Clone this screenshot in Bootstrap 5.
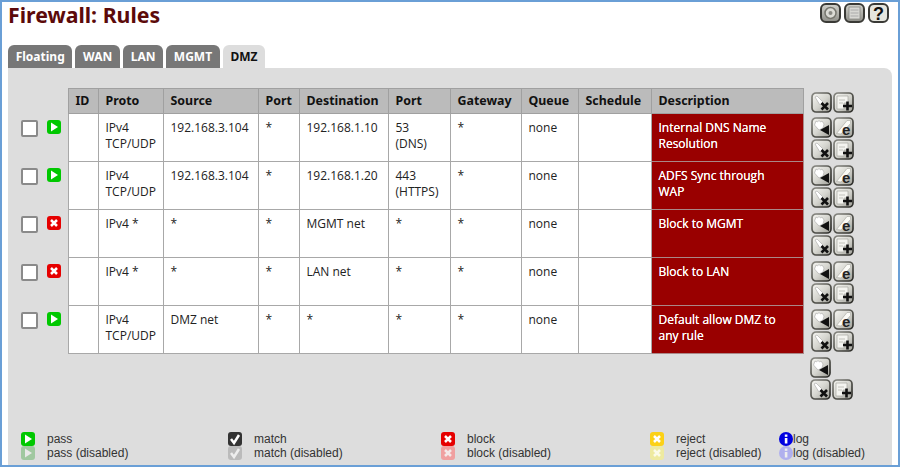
<!doctype html>
<html lang="en">
<head>
<meta charset="utf-8">
<title>Firewall: Rules</title>
<link rel="stylesheet" href="https://cdn.jsdelivr.net/npm/bootstrap@5.3.0/dist/css/bootstrap.min.css">
<style>
html,body{height:100%;background:#fff}
body{font-family:"Open Sans","Noto Sans",sans-serif;font-size:12px;line-height:16px;color:#222;overflow:hidden}
.frame{height:467px;width:900px;border:2px solid #6a9fd6;padding:0 6px 0 6px;display:flex;flex-direction:column}
.headbar{height:43px;align-items:flex-start}
.pagetitle{font:700 21.300px/25px "Noto Sans","Open Sans",sans-serif;color:#5c0a0a;margin:0}
.topicons{padding-top:1px;padding-right:3px;gap:3px}
.tabstrip{border:0;gap:3px;height:23px;flex-wrap:nowrap}
.tabstrip .nav-link{background:#777;color:#fff;border:0;border-radius:6px 6px 0 0;height:23px;padding:3px 7.700px;font:700 12px/17px "Noto Sans",sans-serif;margin:0}
.tabstrip .nav-link.active{background:#ddd;color:#111}
.panelbox{background:#ddd;flex:1;border-radius:0 8px 0 0;padding:20px 0 0 12px;display:flex;flex-direction:column;min-height:0}
.ruletable{table-layout:fixed;width:833px;border-collapse:collapse;margin:0;--bs-table-bg:transparent}
.ruletable td,.ruletable th{padding:5px 7px 0;vertical-align:top;font-weight:400;color:#222;border:0;background:transparent;box-shadow:none}
.ruletable tbody tr{height:48px}
.ruletable thead tr{height:25px}
.ruletable .cellb{background:#fff;border:1px solid #a8a8a8}
.ruletable th.headc{background:#bbb;border:1px solid #a0a0a0;font:700 12.400px/16px "Noto Sans",sans-serif;color:#111;padding:4px 7px 0}
.ruletable .desc{background:#990000;color:#fff;border:1px solid #a88;font-weight:500;padding-top:6px;text-shadow:0 0 .6px #fff}
.ruletable td.lead{padding:6px 0 0 1px}
.ruletable td.acts,.ruletable th.acts{padding:3px 0 0 7px;line-height:0}
.ruletable td.cellb{padding-top:6px}
.pickbox{width:17px;height:17px;background:#fff;border:2px solid #8a8a8a;border-radius:2px;margin-right:9px;flex:none}
.tinyicon{width:14px;height:14px;flex:none;display:block}
.btnicon{width:21px;height:21px;display:block;margin-right:1px;flex:none}
.topicon{width:21px;height:20px;display:block}
.iconrow{height:22px;display:flex}
.legendgrid{margin-top:auto;padding-bottom:5px;padding-left:1px;line-height:14px;color:#333;display:flex;font-family:"Liberation Sans",sans-serif}
.legendcol{display:flex;flex-direction:column}
.legendline{display:flex;align-items:center;height:14px}
.legendline .tinyicon{margin-right:12px}
.legendcol.info .tinyicon{margin-right:0}
.lw1{width:207px}.lw2{width:213px}.lw3{width:209px}.lw4{width:129px}
</style>
</head>
<body>
<svg width="0" height="0" class="position-absolute">
<defs>
<linearGradient id="gb" x1="0" y1="0" x2="1" y2="1"><stop offset="0" stop-color="#f6f6f2"/><stop offset=".5" stop-color="#d6d6d0"/><stop offset="1" stop-color="#9c9c94"/></linearGradient>
<linearGradient id="gs" x1="0" y1="0" x2="1" y2="1"><stop offset="0" stop-color="#8a8a84"/><stop offset=".5" stop-color="#55554f"/><stop offset="1" stop-color="#2c2c28"/></linearGradient>
<linearGradient id="gt" x1="0" y1="0" x2="0" y2="1"><stop offset="0" stop-color="#d4d4ce"/><stop offset="1" stop-color="#8e8e88"/></linearGradient>
<symbol id="base" viewBox="0 0 21 21"><rect x="1" y="1" width="19" height="19" rx="4" fill="url(#gb)" stroke="url(#gs)" stroke-width="1.700"/></symbol>
<symbol id="i-x" viewBox="0 0 21 21"><use href="#base"/><path d="M4 5l2-1 6 6-3 3z" fill="#fff" stroke="#999" stroke-width=".5"/><path d="M10.500 11l6.500 6.500M17 11l-6.500 6.500" stroke="#111" stroke-width="2.600"/></symbol>
<symbol id="i-plus" viewBox="0 0 21 21"><use href="#base"/><path d="M4 4h11v7h-4v6H4z" fill="#f4f4f0" stroke="#a6a6a0" stroke-width=".7"/><path d="M6 8h6M6 11h4" stroke="#c2c2bc"/><path d="M14.500 9.500v9M10 14h9" stroke="#111" stroke-width="2.600"/></symbol>
<symbol id="i-e" viewBox="0 0 21 21"><use href="#base"/><path d="M3.500 16.500L14 3.500h3.500v3L8 17z" fill="#fbfbf7" stroke="#a6a6a0" stroke-width=".6"/><text x="9" y="17.500" font-family="Liberation Sans,sans-serif" font-size="15" font-weight="700" fill="#222">e</text></symbol>
<symbol id="i-left" viewBox="0 0 21 21"><use href="#base"/><path d="M3.500 8L5 4l1.500 1L8 3.500 9.500 5 11 4l2 3-1 4-4 2z" fill="#fff" stroke="#999" stroke-width=".5"/><path d="M18 8v10l-9-5z" fill="#111"/></symbol>
<symbol id="i-gear" viewBox="0 0 21 20"><rect x="1" y="1" width="19" height="18" rx="5" fill="url(#gt)" stroke="#3a3a36" stroke-width="2"/><circle cx="10.500" cy="10" r="5.500" fill="#dcdcd6" stroke="#77776f" stroke-width="1.500"/><circle cx="10.500" cy="10" r="2" fill="#8a8a84"/></symbol>
<symbol id="i-doc" viewBox="0 0 21 20"><rect x="1" y="1" width="19" height="18" rx="5" fill="url(#gt)" stroke="#3a3a36" stroke-width="2"/><rect x="5" y="4" width="11" height="12" fill="#d8d8d4" stroke="#8a8a84" stroke-width=".8"/><path d="M6.500 7h8M6.500 10h8M6.500 13h8" stroke="#aaa"/></symbol>
<symbol id="i-help" viewBox="0 0 21 20"><rect x="1" y="1" width="19" height="18" rx="5" fill="#e6e6de" stroke="#3a3a36" stroke-width="2"/><text x="10.500" y="16.500" text-anchor="middle" font-family="Liberation Sans,sans-serif" font-size="18" font-weight="700" fill="#111">?</text></symbol>
<symbol id="t-pass" viewBox="0 0 14 14"><rect width="14" height="14" rx="3" fill="#00c800"/><path d="M4 2.500v9l7-4.500z" fill="#fff"/></symbol>
<symbol id="t-passd" viewBox="0 0 14 14"><rect width="14" height="14" rx="3" fill="#a0c8a0"/><path d="M4 2.500v9l7-4.500z" fill="#e8e8e8"/></symbol>
<symbol id="t-block" viewBox="0 0 14 14"><rect width="14" height="14" rx="3" fill="#e60000"/><path d="M4 4l6 6M10 4l-6 6" stroke="#fff" stroke-width="2.500"/></symbol>
<symbol id="t-blockd" viewBox="0 0 14 14"><rect width="14" height="14" rx="3" fill="#f0a0a0"/><path d="M4 4l6 6M10 4l-6 6" stroke="#f4e8e8" stroke-width="2.500"/></symbol>
<symbol id="t-match" viewBox="0 0 14 14"><rect width="14" height="14" rx="3" fill="#333"/><path d="M3 7l3 4 5-8" fill="none" stroke="#fff" stroke-width="2.500"/></symbol>
<symbol id="t-matchd" viewBox="0 0 14 14"><rect width="14" height="14" rx="3" fill="#bbb"/><path d="M3 7l3 4 5-8" fill="none" stroke="#eee" stroke-width="2.500"/></symbol>
<symbol id="t-reject" viewBox="0 0 14 14"><rect width="14" height="14" rx="3" fill="#fcd116"/><path d="M4 4l6 6M10 4l-6 6" stroke="#fff" stroke-width="2.500"/></symbol>
<symbol id="t-rejectd" viewBox="0 0 14 14"><rect width="14" height="14" rx="3" fill="#eeeaa0"/><path d="M4 4l6 6M10 4l-6 6" stroke="#fbfbe8" stroke-width="2.500"/></symbol>
<symbol id="t-log" viewBox="0 0 14 14"><circle cx="7" cy="7" r="7" fill="#0000e0"/><rect x="5.800" y="6" width="2.600" height="5.500" fill="#fff"/><rect x="5.800" y="2.500" width="2.600" height="2.300" fill="#fff"/></symbol>
<symbol id="t-logd" viewBox="0 0 14 14"><circle cx="7" cy="7" r="7" fill="#b0b0ee"/><rect x="5.800" y="6" width="2.600" height="5.500" fill="#eee"/><rect x="5.800" y="2.500" width="2.600" height="2.300" fill="#eee"/></symbol>
</defs>
</svg>
<div class="frame">
  <div class="d-flex justify-content-between headbar">
    <h1 class="pagetitle">Firewall: Rules</h1>
    <div class="d-flex topicons">
      <svg class="topicon"><use href="#i-gear"/></svg>
      <svg class="topicon"><use href="#i-doc"/></svg>
      <svg class="topicon"><use href="#i-help"/></svg>
    </div>
  </div>
  <ul class="nav nav-tabs tabstrip">
    <li class="nav-item"><a class="nav-link" href="#">Floating</a></li>
    <li class="nav-item"><a class="nav-link" href="#">WAN</a></li>
    <li class="nav-item"><a class="nav-link" href="#">LAN</a></li>
    <li class="nav-item"><a class="nav-link" href="#">MGMT</a></li>
    <li class="nav-item"><a class="nav-link active" href="#">DMZ</a></li>
  </ul>
  <div class="panelbox">
    <table class="table ruletable">
      <colgroup>
        <col style="width:48px"><col style="width:30px"><col style="width:65px"><col style="width:95px"><col style="width:41px"><col style="width:89px"><col style="width:62px"><col style="width:71px"><col style="width:57px"><col style="width:73px"><col style="width:152px"><col>
      </colgroup>
      <thead>
        <tr>
          <th class="lead"></th>
          <th class="headc">ID</th><th class="headc">Proto</th><th class="headc">Source</th><th class="headc">Port</th><th class="headc">Destination</th><th class="headc">Port</th><th class="headc">Gateway</th><th class="headc">Queue</th><th class="headc">Schedule</th><th class="headc">Description</th>
          <th class="acts"><div class="iconrow"><svg class="btnicon"><use href="#i-x"/></svg><svg class="btnicon"><use href="#i-plus"/></svg></div></th>
        </tr>
      </thead>
      <tbody>
        <tr>
          <td class="lead"><div class="d-flex"><span class="pickbox"></span><svg class="tinyicon"><use href="#t-pass"/></svg></div></td>
          <td class="cellb"></td><td class="cellb">IPv4 TCP/UDP</td><td class="cellb">192.168.3.104</td><td class="cellb">*</td><td class="cellb">192.168.1.10</td><td class="cellb">53<br>(DNS)</td><td class="cellb">*</td><td class="cellb">none</td><td class="cellb"></td><td class="desc">Internal DNS Name Resolution</td>
          <td class="acts"><div class="iconrow"><svg class="btnicon"><use href="#i-left"/></svg><svg class="btnicon"><use href="#i-e"/></svg></div><div class="iconrow"><svg class="btnicon"><use href="#i-x"/></svg><svg class="btnicon"><use href="#i-plus"/></svg></div></td>
        </tr>
        <tr>
          <td class="lead"><div class="d-flex"><span class="pickbox"></span><svg class="tinyicon"><use href="#t-pass"/></svg></div></td>
          <td class="cellb"></td><td class="cellb">IPv4 TCP/UDP</td><td class="cellb">192.168.3.104</td><td class="cellb">*</td><td class="cellb">192.168.1.20</td><td class="cellb">443<br>(HTTPS)</td><td class="cellb">*</td><td class="cellb">none</td><td class="cellb"></td><td class="desc">ADFS Sync through<br>WAP</td>
          <td class="acts"><div class="iconrow"><svg class="btnicon"><use href="#i-left"/></svg><svg class="btnicon"><use href="#i-e"/></svg></div><div class="iconrow"><svg class="btnicon"><use href="#i-x"/></svg><svg class="btnicon"><use href="#i-plus"/></svg></div></td>
        </tr>
        <tr>
          <td class="lead"><div class="d-flex"><span class="pickbox"></span><svg class="tinyicon"><use href="#t-block"/></svg></div></td>
          <td class="cellb"></td><td class="cellb">IPv4 *</td><td class="cellb">*</td><td class="cellb">*</td><td class="cellb">MGMT net</td><td class="cellb">*</td><td class="cellb">*</td><td class="cellb">none</td><td class="cellb"></td><td class="desc">Block to MGMT</td>
          <td class="acts"><div class="iconrow"><svg class="btnicon"><use href="#i-left"/></svg><svg class="btnicon"><use href="#i-e"/></svg></div><div class="iconrow"><svg class="btnicon"><use href="#i-x"/></svg><svg class="btnicon"><use href="#i-plus"/></svg></div></td>
        </tr>
        <tr>
          <td class="lead"><div class="d-flex"><span class="pickbox"></span><svg class="tinyicon"><use href="#t-block"/></svg></div></td>
          <td class="cellb"></td><td class="cellb">IPv4 *</td><td class="cellb">*</td><td class="cellb">*</td><td class="cellb">LAN net</td><td class="cellb">*</td><td class="cellb">*</td><td class="cellb">none</td><td class="cellb"></td><td class="desc">Block to LAN</td>
          <td class="acts"><div class="iconrow"><svg class="btnicon"><use href="#i-left"/></svg><svg class="btnicon"><use href="#i-e"/></svg></div><div class="iconrow"><svg class="btnicon"><use href="#i-x"/></svg><svg class="btnicon"><use href="#i-plus"/></svg></div></td>
        </tr>
        <tr>
          <td class="lead"><div class="d-flex"><span class="pickbox"></span><svg class="tinyicon"><use href="#t-pass"/></svg></div></td>
          <td class="cellb"></td><td class="cellb">IPv4 TCP/UDP</td><td class="cellb">DMZ net</td><td class="cellb">*</td><td class="cellb">*</td><td class="cellb">*</td><td class="cellb">*</td><td class="cellb">none</td><td class="cellb"></td><td class="desc">Default allow DMZ to any rule</td>
          <td class="acts"><div class="iconrow"><svg class="btnicon"><use href="#i-left"/></svg><svg class="btnicon"><use href="#i-e"/></svg></div><div class="iconrow"><svg class="btnicon"><use href="#i-x"/></svg><svg class="btnicon"><use href="#i-plus"/></svg></div></td>
        </tr>
        <tr>
          <td colspan="11"></td>
          <td class="acts"><div class="iconrow"><svg class="btnicon"><use href="#i-left"/></svg></div><div class="iconrow"><svg class="btnicon"><use href="#i-x"/></svg><svg class="btnicon"><use href="#i-plus"/></svg></div></td>
        </tr>
      </tbody>
    </table>
    <div class="legendgrid">
      <div class="legendcol lw1">
        <div class="legendline"><svg class="tinyicon"><use href="#t-pass"/></svg>pass</div>
        <div class="legendline"><svg class="tinyicon"><use href="#t-passd"/></svg>pass (disabled)</div>
      </div>
      <div class="legendcol lw2">
        <div class="legendline"><svg class="tinyicon"><use href="#t-match"/></svg>match</div>
        <div class="legendline"><svg class="tinyicon"><use href="#t-matchd"/></svg>match (disabled)</div>
      </div>
      <div class="legendcol lw3">
        <div class="legendline"><svg class="tinyicon"><use href="#t-block"/></svg>block</div>
        <div class="legendline"><svg class="tinyicon"><use href="#t-blockd"/></svg>block (disabled)</div>
      </div>
      <div class="legendcol lw4">
        <div class="legendline"><svg class="tinyicon"><use href="#t-reject"/></svg>reject</div>
        <div class="legendline"><svg class="tinyicon"><use href="#t-rejectd"/></svg>reject (disabled)</div>
      </div>
      <div class="legendcol info">
        <div class="legendline"><svg class="tinyicon"><use href="#t-log"/></svg>log</div>
        <div class="legendline"><svg class="tinyicon"><use href="#t-logd"/></svg>log (disabled)</div>
      </div>
    </div>
  </div>
</div>
</body>
</html>
